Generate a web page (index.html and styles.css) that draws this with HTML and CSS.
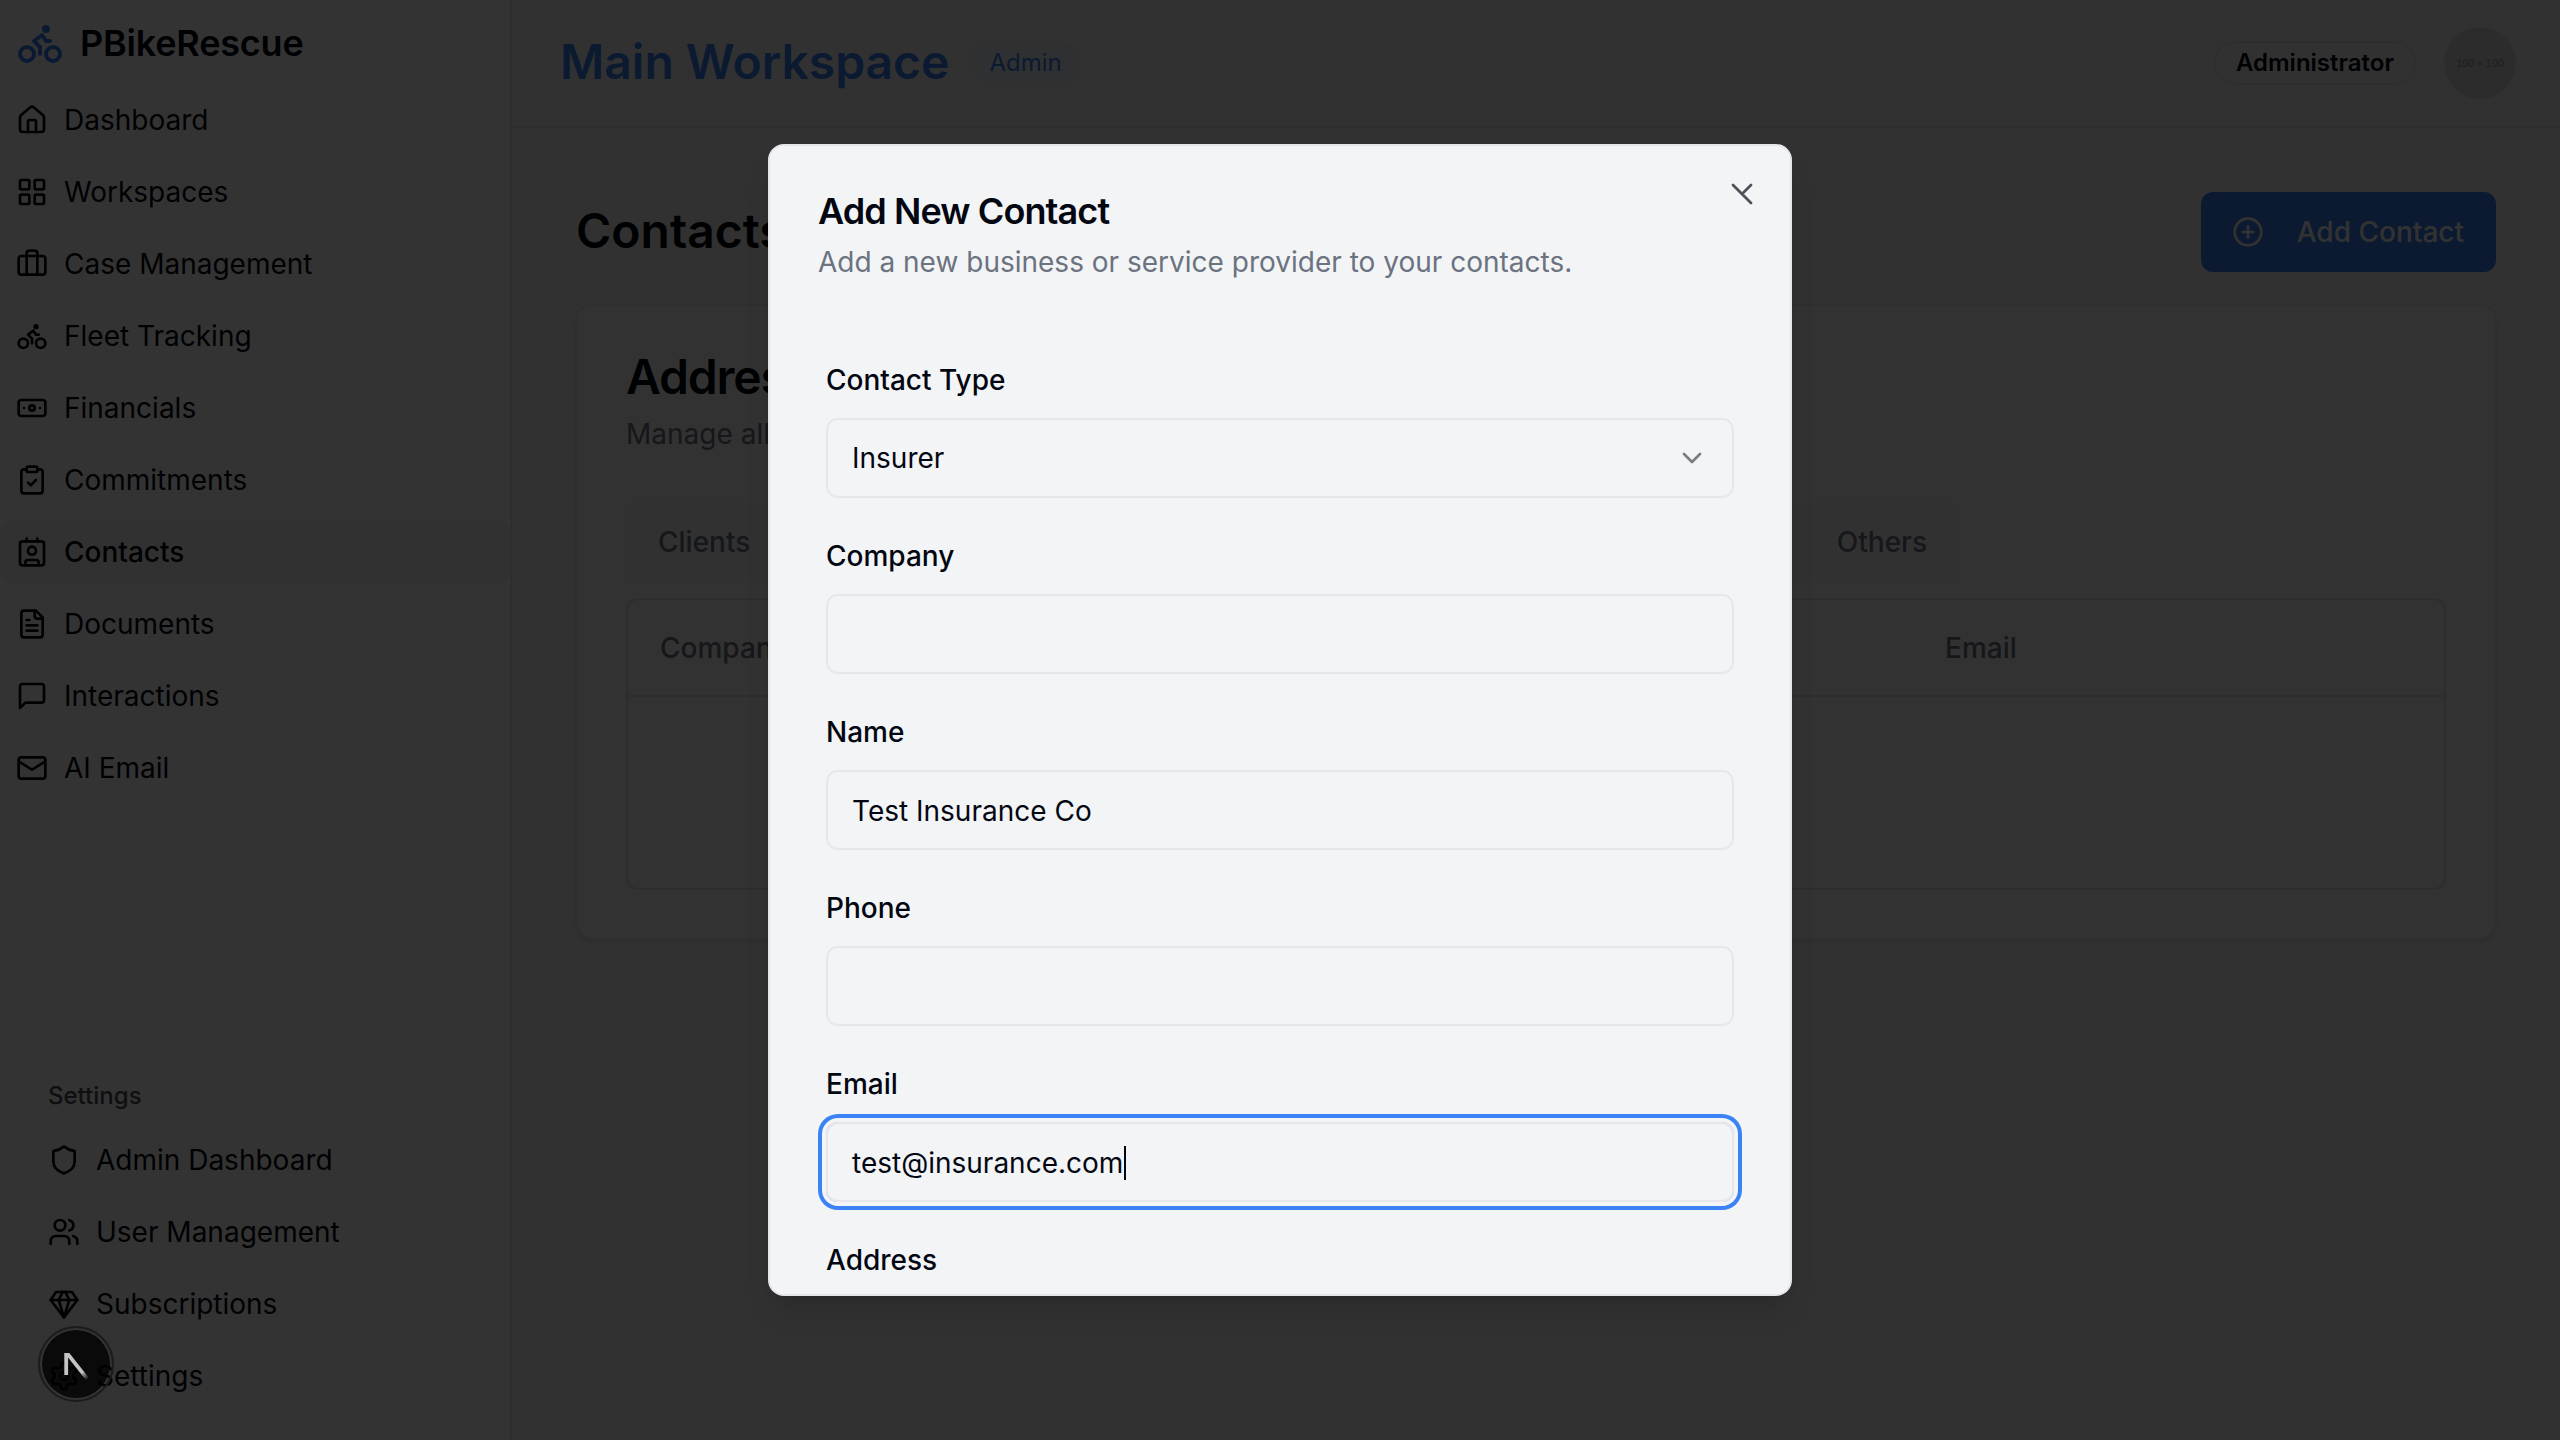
FILE: index.html
```html
<!DOCTYPE html>
<html lang="en">
<head>
<meta charset="utf-8">
<title>PBikeRescue</title>
<link rel="stylesheet" href="styles.css">
</head>
<body>
<div class="app">
  <aside class="sidebar">
    <div class="brand">
      <svg class="icon brand-icon" viewBox="0 0 24 24"><circle cx="18.5" cy="17.5" r="3.5"/><circle cx="5.5" cy="17.5" r="3.5"/><circle cx="15" cy="5" r="1"/><path d="M12 17.5V14l-3-3 4-3 2 3h2"/></svg>
      <span>PBikeRescue</span>
    </div>
    <nav class="nav">
      <a class="nav-item"><svg class="icon" viewBox="0 0 24 24"><path d="M15 21v-8a1 1 0 0 0-1-1h-4a1 1 0 0 0-1 1v8"/><path d="M3 10a2 2 0 0 1 .709-1.528l7-5.999a2 2 0 0 1 2.582 0l7 5.999A2 2 0 0 1 21 10v9a2 2 0 0 1-2 2H5a2 2 0 0 1-2-2z"/></svg><span>Dashboard</span></a>
      <a class="nav-item"><svg class="icon" viewBox="0 0 24 24"><rect width="7" height="7" x="3" y="3" rx="1"/><rect width="7" height="7" x="14" y="3" rx="1"/><rect width="7" height="7" x="14" y="14" rx="1"/><rect width="7" height="7" x="3" y="14" rx="1"/></svg><span>Workspaces</span></a>
      <a class="nav-item"><svg class="icon" viewBox="0 0 24 24"><path d="M16 20V4a2 2 0 0 0-2-2h-4a2 2 0 0 0-2 2v16"/><rect width="20" height="14" x="2" y="6" rx="2"/></svg><span>Case Management</span></a>
      <a class="nav-item"><svg class="icon" viewBox="0 0 24 24"><circle cx="18.5" cy="17.5" r="3.5"/><circle cx="5.5" cy="17.5" r="3.5"/><circle cx="15" cy="5" r="1"/><path d="M12 17.5V14l-3-3 4-3 2 3h2"/></svg><span>Fleet Tracking</span></a>
      <a class="nav-item"><svg class="icon" viewBox="0 0 24 24"><rect width="20" height="12" x="2" y="6" rx="2"/><circle cx="12" cy="12" r="2"/><path d="M6 12h.01M18 12h.01"/></svg><span>Financials</span></a>
      <a class="nav-item"><svg class="icon" viewBox="0 0 24 24"><rect width="8" height="4" x="8" y="2" rx="1"/><path d="M16 4h2a2 2 0 0 1 2 2v14a2 2 0 0 1-2 2H6a2 2 0 0 1-2-2V6a2 2 0 0 1 2-2h2"/><path d="m9 14 2 2 4-4"/></svg><span>Commitments</span></a>
      <a class="nav-item active"><svg class="icon" viewBox="0 0 24 24"><path d="M16 2v2"/><path d="M7 22v-2a2 2 0 0 1 2-2h6a2 2 0 0 1 2 2v2"/><path d="M8 2v2"/><circle cx="12" cy="11" r="3"/><rect x="3" y="4" width="18" height="18" rx="2"/></svg><span>Contacts</span></a>
      <a class="nav-item"><svg class="icon" viewBox="0 0 24 24"><path d="M15 2H6a2 2 0 0 0-2 2v16a2 2 0 0 0 2 2h12a2 2 0 0 0 2-2V7Z"/><path d="M14 2v4a2 2 0 0 0 2 2h4"/><path d="M10 9H8"/><path d="M16 13H8"/><path d="M16 17H8"/></svg><span>Documents</span></a>
      <a class="nav-item"><svg class="icon" viewBox="0 0 24 24"><path d="M21 15a2 2 0 0 1-2 2H7l-4 4V5a2 2 0 0 1 2-2h14a2 2 0 0 1 2 2z"/></svg><span>Interactions</span></a>
      <a class="nav-item"><svg class="icon" viewBox="0 0 24 24"><rect width="20" height="16" x="2" y="4" rx="2"/><path d="m22 7-8.97 5.7a1.94 1.94 0 0 1-2.06 0L2 7"/></svg><span>AI Email</span></a>
    </nav>
    <div class="settings">
      <div class="settings-label">Settings</div>
      <nav class="nav">
        <a class="nav-item"><svg class="icon" viewBox="0 0 24 24"><path d="M20 13c0 5-3.5 7.5-7.66 8.95a1 1 0 0 1-.67-.01C7.5 20.5 4 18 4 13V6a1 1 0 0 1 1-1c2 0 4.5-1.2 6.24-2.72a1.17 1.17 0 0 1 1.52 0C14.51 3.81 17 5 19 5a1 1 0 0 1 1 1z"/></svg><span>Admin Dashboard</span></a>
        <a class="nav-item"><svg class="icon" viewBox="0 0 24 24"><path d="M16 21v-2a4 4 0 0 0-4-4H6a4 4 0 0 0-4 4v2"/><circle cx="9" cy="7" r="4"/><path d="M22 21v-2a4 4 0 0 0-3-3.87"/><path d="M16 3.13a4 4 0 0 1 0 7.75"/></svg><span>User Management</span></a>
        <a class="nav-item"><svg class="icon" viewBox="0 0 24 24"><path d="M6 3h12l4 6-10 13L2 9Z"/><path d="M11 3 8 9l4 13 4-13-3-6"/><path d="M2 9h20"/></svg><span>Subscriptions</span></a>
        <a class="nav-item"><svg class="icon" viewBox="0 0 24 24"><path d="M12.22 2h-.44a2 2 0 0 0-2 2v.18a2 2 0 0 1-1 1.73l-.43.25a2 2 0 0 1-2 0l-.15-.08a2 2 0 0 0-2.73.73l-.22.38a2 2 0 0 0 .73 2.73l.15.1a2 2 0 0 1 1 1.72v.51a2 2 0 0 1-1 1.74l-.15.09a2 2 0 0 0-.73 2.73l.22.38a2 2 0 0 0 2.73.73l.15-.08a2 2 0 0 1 2 0l.43.25a2 2 0 0 1 1 1.73V20a2 2 0 0 0 2 2h.44a2 2 0 0 0 2-2v-.18a2 2 0 0 1 1-1.73l.43-.25a2 2 0 0 1 2 0l.15.08a2 2 0 0 0 2.73-.73l.22-.39a2 2 0 0 0-.73-2.73l-.15-.08a2 2 0 0 1-1-1.74v-.5a2 2 0 0 1 1-1.74l.15-.09a2 2 0 0 0 .73-2.73l-.22-.38a2 2 0 0 0-2.73-.73l-.15.08a2 2 0 0 1-2 0l-.43-.25a2 2 0 0 1-1-1.73V4a2 2 0 0 0-2-2z"/><circle cx="12" cy="12" r="3"/></svg><span>Settings</span></a>
      </nav>
    </div>
  </aside>

  <div class="page">
    <header class="header">
      <h1 class="workspace">Main Workspace</h1>
      <span class="role">Admin</span>
      <span class="user">Administrator</span>
      <span class="avatar">100 × 100</span>
    </header>
    <main class="main">
      <div class="main-head">
        <h2 class="main-title">Contacts</h2>
        <button class="add"><svg class="icon" viewBox="0 0 24 24"><circle cx="12" cy="12" r="10"/><path d="M8 12h8"/><path d="M12 8v8"/></svg><span>Add Contact</span></button>
      </div>
      <section class="card">
        <h3 class="card-title">Address</h3>
        <p class="card-text">Manage all</p>
        <div class="tabs"><span>Clients</span><span>Others</span></div>
        <div class="table">
          <div class="table-head"><span class="col-company">Company</span><span>Email</span></div>
        </div>
      </section>
    </main>
  </div>
</div>

<div class="overlay">
  <div class="dialog">
    <h2 class="dialog-title">Add New Contact</h2>
    <p class="dialog-text">Add a new business or service provider to your contacts.</p>
    <form class="form">
      <label class="label">Contact Type</label>
      <div class="field select"><span>Insurer</span><svg class="icon" viewBox="0 0 24 24"><path d="m6 9 6 6 6-6"/></svg></div>
      <label class="label">Company</label>
      <div class="field"></div>
      <label class="label">Name</label>
      <div class="field input">Test Insurance Co</div>
      <label class="label">Phone</label>
      <div class="field"></div>
      <label class="label">Email</label>
      <div class="field input focused"><span>test@insurance.com</span><i class="caret"></i></div>
      <label class="label">Address</label>
    </form>
    <svg class="close" viewBox="0 0 32 32"><path d="M7 7 25 25M25 7 16 16"/></svg>
  </div>
</div>

<div class="dev-badge">
  <div class="dev-disk">
    <svg viewBox="0 0 40 40" width="40" height="40" fill="none">
      <defs><linearGradient id="fade" x1="20" y1="21" x2="31" y2="36" gradientUnits="userSpaceOnUse"><stop stop-color="#c4c4c4"/><stop offset="0.5" stop-color="#c4c4c4"/><stop offset="1" stop-color="#c4c4c4" stop-opacity="0"/></linearGradient></defs>
      <path d="M10.2 31V9" stroke="#c4c4c4" stroke-width="3.8"/>
      <path d="M8.3 9h5L33 34l-3 2.3L10.5 11.5z" fill="url(#fade)"/>
    </svg>
  </div>
</div>
</body>
</html>
```
FILE: styles.css
```css
* { box-sizing: border-box; }
body {
  margin: 0;
  width: 2560px;
  height: 1440px;
  overflow: hidden;
  font-family: Inter, sans-serif;
  font-size: 28px;
  line-height: 40px;
  color: #030712;
  background: #f3f4f6;
}
h1, h2, h3, p { margin: 0; }
.icon {
  width: 32px;
  height: 32px;
  flex: none;
  fill: none;
  stroke: currentColor;
  stroke-width: 2;
  stroke-linecap: round;
  stroke-linejoin: round;
}
.app { display: flex; height: 100%; }

.sidebar {
  width: 512px;
  flex: none;
  display: flex;
  flex-direction: column;
  background: #fff;
  border-right: 2px solid #e5e7eb;
}
.brand {
  display: flex;
  align-items: center;
  gap: 16px;
  height: 88px;
  padding: 0 0 2px 16px;
  font-size: 36px;
  font-weight: 600;
  letter-spacing: -0.2px;
}
.brand-icon { width: 48px; height: 48px; color: #3b82f6; }
.nav { display: flex; flex-direction: column; gap: 8px; }
.nav-item {
  display: flex;
  align-items: center;
  gap: 16px;
  height: 64px;
  padding: 0 16px;
  border-radius: 12px;
}
.nav-item.active { background: #f6f6f7; font-weight: 500; }
.settings { margin-top: auto; padding: 0 32px 32px; }
.settings-label {
  padding-left: 16px;
  height: 64px;
  line-height: 64px;
  font-size: 24px;
  font-weight: 500;
  color: #4b4d55;
}

.page { flex: 1; display: flex; flex-direction: column; }
.header {
  display: flex;
  align-items: center;
  height: 128px;
  padding: 0 44px 0 48px;
  border-bottom: 2px solid #e5e7eb;
}
.workspace { font-size: 48px; line-height: 64px; font-weight: 600; color: #3b82f6; padding-bottom: 2px; }
.role {
  margin-left: 24px;
  padding: 0 16px;
  font-size: 24px;
  border-radius: 12px;
  color: #3b82f6;
  background: #eaeef7;
}
.user {
  margin-left: auto;
  padding: 0 20px;
  font-size: 24px;
  font-weight: 600;
  border: 2px solid #e5e7eb;
  border-radius: 22px;
}
.avatar {
  width: 72px;
  height: 72px;
  margin-left: 28px;
  border-radius: 50%;
  background: #ddd;
  color: #a6a6a6;
  font-family: Lato, sans-serif;
  font-size: 10.5px;
  font-weight: 700;
  line-height: 72px;
  text-align: center;
}
.main { padding: 64px; }
.main-head { display: flex; justify-content: space-between; height: 80px; margin-bottom: 32px; }
.main-title { font-size: 48px; line-height: 78px; font-weight: 600; }
.add {
  display: flex;
  align-items: center;
  gap: 33px;
  height: 80px;
  padding: 0 32px 0 31px;
  border: 0;
  border-radius: 12px;
  background: #3b82f6;
  color: #f9fafb;
  font: 500 28px/40px Inter, sans-serif;
}
.card {
  height: 636px;
  padding: 48px;
  background: #fafafa;
  border: 2px solid #e5e7eb;
  border-radius: 16px;
  box-shadow: 0 2px 4px rgba(0,0,0,.08);
}
.card-title { font-size: 48px; line-height: 46px; font-weight: 600; letter-spacing: -1.2px; }
.card-text { margin-top: 14px; color: #6b7280; }
.tabs {
  display: flex;
  align-items: center;
  justify-content: space-between;
  width: 1333px;
  height: 80px;
  margin-top: 48px;
  padding: 0 32px;
  border-radius: 12px;
  background: #f3f4f6;
  color: #6b7280;
  font-weight: 500;
}
.table {
  height: 292px;
  margin-top: 16px;
  border: 2px solid #e0e2e6;
  border-radius: 12px;
}
.table-head {
  display: flex;
  align-items: center;
  height: 97px;
  padding-left: 32px;
  border-bottom: 2px solid #e0e2e6;
  color: #6b7280;
  font-weight: 500;
}
.col-company { width: 1285px; }

.overlay {
  position: absolute;
  inset: 0;
  display: flex;
  align-items: center;
  justify-content: center;
  background: rgba(0,0,0,.8);
}
.dialog {
  position: relative;
  width: 1024px;
  height: 1152px;
  padding: 48px;
  overflow: hidden;
  background: #f3f4f6;
  border: 2px solid #e5e7eb;
  border-radius: 16px;
  box-shadow: 0 20px 30px -6px rgba(0,0,0,.1), 0 8px 12px -8px rgba(0,0,0,.1);
}
.dialog-title { font-size: 36px; line-height: 34px; font-weight: 600; letter-spacing: -0.9px; }
.dialog-text { margin-top: 14px; color: #6b7280; }
.form { padding: 84px 8px 0; }
.label { display: block; font-weight: 500; line-height: 28px; margin-bottom: 24px; }
.field {
  display: flex;
  align-items: center;
  height: 80px;
  margin-bottom: 44px;
  padding: 0 24px;
  border: 2px solid #e5e7eb;
  border-radius: 12px;
}
.input { padding-top: 2px; }
.select { justify-content: space-between; }
.select .icon { color: #7a7d84; }
.focused { box-shadow: 0 0 0 4px #f3f4f6, 0 0 0 8px #3b82f6; }
.caret { width: 2px; height: 34px; margin-left: 1px; background: #030712; }
.close {
  position: absolute;
  top: 32px;
  right: 32px;
  width: 32px;
  height: 32px;
  fill: none;
  stroke: #4f525b;
  stroke-width: 2.8;
  stroke-linecap: round;
}

/* Floating developer tools button */
.dev-badge {
  position: absolute;
  left: 38px;
  top: 1326px;
  width: 76px;
  height: 76px;
  padding: 2px;
  border: 2px solid #1b1b1b;
  border-radius: 50%;
}
.dev-disk {
  display: flex;
  align-items: center;
  justify-content: center;
  height: 68px;
  border-radius: 50%;
  background: rgba(0,0,0,.8);
}
```
